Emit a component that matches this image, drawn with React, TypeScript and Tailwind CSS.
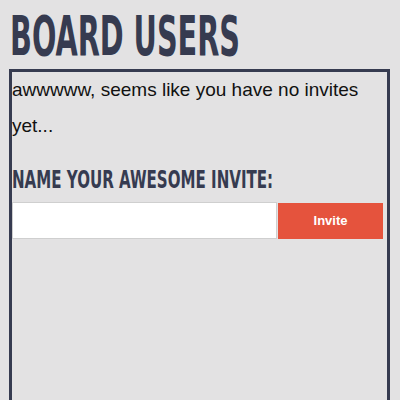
import React from "react";

const display = "font-['Liberation_Sans_Narrow','DejaVu_Sans_Condensed',sans-serif] font-bold uppercase";

export default function App() {
  return (
    <div className="h-[400px] w-[400px] overflow-hidden bg-[#e3e2e3] font-['Liberation_Sans',Arial,sans-serif]">
      {/* Title */}
      <h1 className={`${display} ml-[10px] pt-[8px] h-[69px] text-[56px] leading-[56px] text-[#363b50] whitespace-nowrap origin-left scale-x-[0.57]`}>
        Board Users
      </h1>

      {/* Board panel */}
      <div className="ml-[9px] w-[381px] h-[400px] border-[3px] border-[#363b50]">
        <p className="text-[19px] leading-[36px] text-[#111111] pr-[10px]">
          awwwww, seems like you have no invites yet...
        </p>

        <h2 className={`${display} mt-[22px] text-[25px] leading-[28px] text-[#363b50] whitespace-nowrap origin-left scale-x-[0.67]`}>
          Name your awesome invite:
        </h2>

        <div className="mt-[8px] flex items-end pr-[4px]">
          <input
            type="text"
            className="h-[37px] flex-1 bg-white border border-[#cfcfcf] outline-none"
          />
          <button className="h-[36px] w-[105px] ml-[1px] bg-[#e5533d] text-white text-[13px] font-bold">
            Invite
          </button>
        </div>
      </div>
    </div>
  );
}
